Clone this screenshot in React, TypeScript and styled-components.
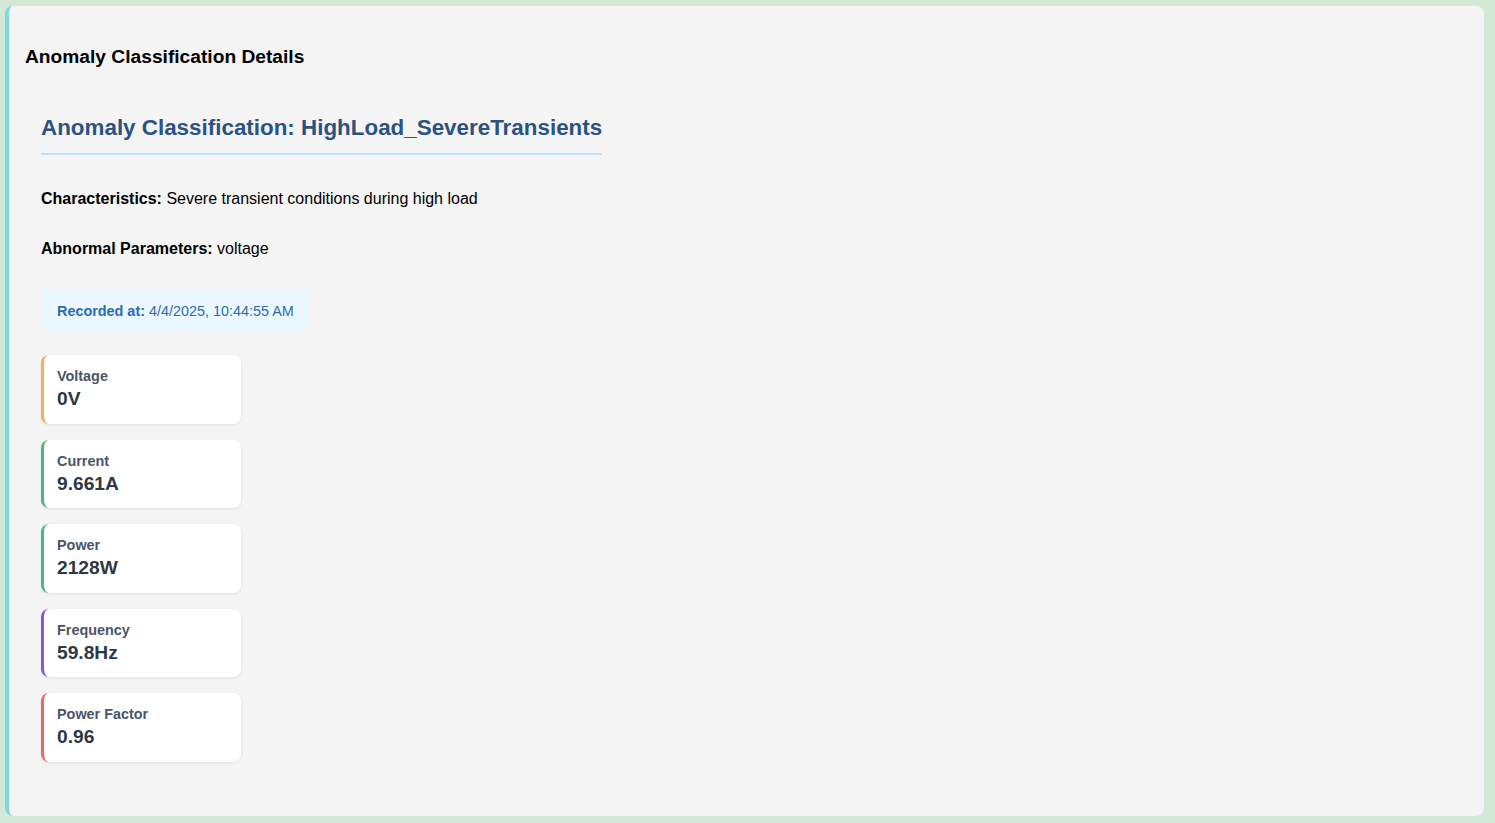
import React from "react"
import styled, { createGlobalStyle } from "styled-components"

const GlobalStyle = createGlobalStyle`
  html, body {
    margin: 0;
    padding: 0;
    background: #d3e8d5;
    font-family: "Liberation Sans", Arial, sans-serif;
  }
`

const Page = styled.div`
  min-height: 100vh;
  box-sizing: border-box;
  padding: 6px 11px 7px 5px;
  display: flex;
`

const Panel = styled.section`
  flex: 1;
  background: #f4f4f4;
  border-left: 4px solid #7fd8dc;
  border-radius: 8px;
  padding: 20px 16px;
`

const PanelTitle = styled.h3`
  margin: 20px 0 47px;
  font-size: 19.2px;
  font-weight: bold;
  color: #000;
`

const Body = styled.div`
  padding: 0 16px;
`

const Heading = styled.h2`
  display: inline-block;
  margin: 0 0 11px;
  padding-bottom: 12px;
  border-bottom: 2px solid #bee3f8;
  font-size: 22.4px;
  font-weight: bold;
  color: #2c5282;
`

const Info = styled.p`
  margin: 16px 0;
  font-size: 16px;
  color: #000;
  line-height: 34px;
`

const Label = styled.strong`
  font-weight: bold;
`

const Recorded = styled.div`
  display: inline-block;
  margin: 8px 0 24px;
  padding: 12.5px 16px;
  background: #ebf8ff;
  border-radius: 6px;
  font-size: 14.4px;
  color: #2b6cb0;
`

const Metrics = styled.div`
  display: flex;
  flex-direction: column;
  gap: 16px;
`

const Card = styled.div<{ accent: string }>`
  width: 200px;
  box-sizing: border-box;
  background: #fff;
  border-left: 3px solid ${p => p.accent};
  border-radius: 8px;
  padding: 13.25px 13px;
  box-shadow: 0 1px 3px rgba(0, 0, 0, 0.08);
`

const CardLabel = styled.div`
  font-size: 14.4px;
  font-weight: bold;
  color: #4a5568;
  margin-bottom: 4px;
`

const CardValue = styled.div`
  font-size: 19.2px;
  font-weight: bold;
  color: #2d3748;
`

const metrics = [
  { label: "Voltage", value: "0V", accent: "#f6ad55" },
  { label: "Current", value: "9.661A", accent: "#48bb78" },
  { label: "Power", value: "2128W", accent: "#48bb78" },
  { label: "Frequency", value: "59.8Hz", accent: "#805ad5" },
  { label: "Power Factor", value: "0.96", accent: "#f56565" },
]

const App = () => (
  <>
    <GlobalStyle />
    <Page>
      <Panel>
        <PanelTitle>Anomaly Classification Details</PanelTitle>
        <Body>
          <Heading>Anomaly Classification: HighLoad_SevereTransients</Heading>
          <Info>
            <Label>Characteristics:</Label> Severe transient conditions during high load
          </Info>
          <Info>
            <Label>Abnormal Parameters:</Label> voltage
          </Info>
          <Recorded>
            <Label>Recorded at:</Label> 4/4/2025, 10:44:55 AM
          </Recorded>
          <Metrics>
            {metrics.map(m => (
              <Card key={m.label} accent={m.accent}>
                <CardLabel>{m.label}</CardLabel>
                <CardValue>{m.value}</CardValue>
              </Card>
            ))}
          </Metrics>
        </Body>
      </Panel>
    </Page>
  </>
)

export default App
